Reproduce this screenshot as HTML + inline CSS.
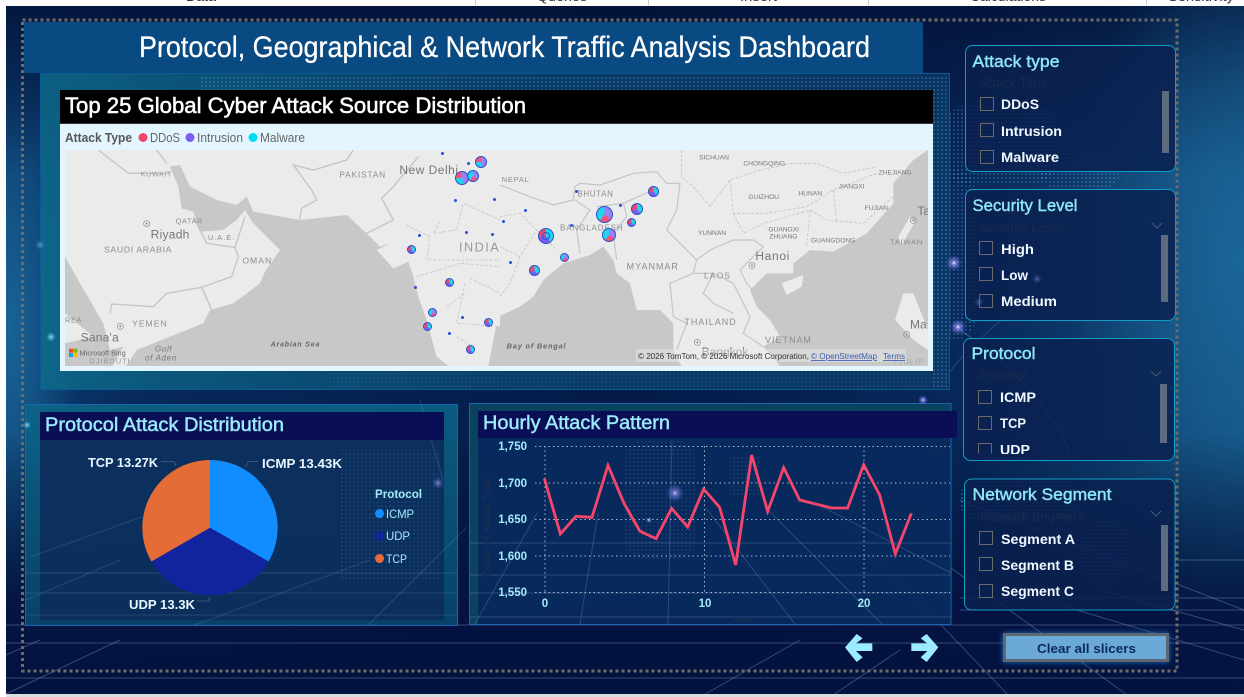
<!DOCTYPE html>
<html lang="en"><head><meta charset="utf-8"><title>Protocol, Geographical &amp; Network Traffic Analysis Dashboard</title>
<style>
html,body{margin:0;padding:0;background:#fff}
#r{position:relative;width:1244px;height:697px;overflow:hidden;font-family:"Liberation Sans",sans-serif}
svg{position:absolute;left:0;top:0}
.p{position:absolute;border-radius:50%;box-sizing:border-box;border:1px solid #2a50c8}
.a{background:conic-gradient(#9a80f5 0 45%,#22d3ee 45% 75%,#f5537a 75%)}
.b{background:conic-gradient(#9a80f5 0 35%,#f5537a 35% 60%,#22d3ee 60%)}
.c{background:conic-gradient(#22d3ee 0 40%,#7a5cf0 40% 70%,#f0446e 70%)}
.d{position:absolute;width:3px;height:3px;border-radius:50%;background:#2a50d8}
</style></head><body><div id="r">
<svg width="1244" height="697" viewBox="0 0 1244 697" xmlns="http://www.w3.org/2000/svg">
<defs>
<linearGradient id="bg" x1="0" y1="0" x2="1" y2="0"><stop offset="0" stop-color="#0b3f72"/><stop offset=".12" stop-color="#07285a"/><stop offset=".5" stop-color="#041a48"/><stop offset=".78" stop-color="#07285a"/><stop offset="1" stop-color="#135080"/></linearGradient>
<linearGradient id="bot" x1="0" y1="0" x2="0" y2="1"><stop offset="0" stop-color="#031030" stop-opacity="0"/><stop offset=".62" stop-color="#031030" stop-opacity="0"/><stop offset=".88" stop-color="#041240" stop-opacity=".95"/><stop offset="1" stop-color="#041240"/></linearGradient>
<linearGradient id="top" x1="0" y1="0" x2="0" y2="1"><stop offset="0" stop-color="#031238" stop-opacity=".9"/><stop offset=".25" stop-color="#031238" stop-opacity="0"/></linearGradient>
<radialGradient id="rgl" cx=".5" cy=".5" r=".5"><stop offset="0" stop-color="#1c6a9c" stop-opacity=".85"/><stop offset="1" stop-color="#1c6a9c" stop-opacity="0"/></radialGradient>
<radialGradient id="g" cx=".5" cy=".5" r=".5"><stop offset="0" stop-color="#fff" stop-opacity=".95"/><stop offset=".25" stop-color="#a9a0ff" stop-opacity=".7"/><stop offset="1" stop-color="#6a70ff" stop-opacity="0"/></radialGradient>
<radialGradient id="gc" cx=".5" cy=".5" r=".5"><stop offset="0" stop-color="#9fe8ff" stop-opacity=".9"/><stop offset="1" stop-color="#3ab0e8" stop-opacity="0"/></radialGradient>
<linearGradient id="mp" x1="0" y1="0" x2="1" y2="0"><stop offset="0" stop-color="#0d6a8a" stop-opacity=".85"/><stop offset=".5" stop-color="#0a4a72" stop-opacity=".75"/><stop offset="1" stop-color="#0a3a66" stop-opacity=".8"/></linearGradient>
<linearGradient id="lp" x1="0" y1="0" x2="0" y2="1"><stop offset="0" stop-color="#0c6688"/><stop offset="1" stop-color="#094a70"/></linearGradient>
<pattern id="dots" width="4" height="4" patternUnits="userSpaceOnUse"><rect x="1" y="1" width="2" height="2" fill="#5aa0d8" fill-opacity=".3"/></pattern>
<pattern id="dotsf" width="4" height="4" patternUnits="userSpaceOnUse"><rect x="1" y="1" width="2" height="2" fill="#5aa0d8" fill-opacity=".14"/></pattern>
<clipPath id="mc"><rect x="65" y="150" width="863" height="216"/></clipPath>
<clipPath id="sc3"><rect x="965" y="338" width="210" height="116"/></clipPath>
<filter id="gl" x="-20%" y="-40%" width="140%" height="180%"><feGaussianBlur stdDeviation="3"/></filter>
</defs>

<!-- background -->
<rect width="1244" height="697" fill="url(#bg)"/>
<ellipse cx="10" cy="330" rx="70" ry="260" fill="url(#rgl)"/>
<rect width="1244" height="697" fill="url(#top)"/>
<ellipse cx="1240" cy="260" rx="170" ry="340" fill="url(#rgl)"/>
<rect width="1244" height="697" fill="url(#bot)"/>
<g fill="url(#dots)">
<rect x="940" y="105" width="120" height="80" rx="30"/>
<rect x="925" y="170" width="50" height="170" rx="20"/>
<rect x="1040" y="150" width="80" height="40" rx="18"/>
<rect x="960" y="480" width="120" height="40" rx="18"/>
<rect x="1080" y="520" width="50" height="60" rx="20"/>
</g>
<g stroke="#a9c4ee" stroke-opacity=".3" stroke-width="1" fill="none">
<path d="M6 643H1244M6 678H1244M6 625H1244M960 598H1244M960 610H1244M1176 560H1244"/>
<path d="M960 500L1244 610M940 560L1130 697M850 530L1010 697M1010 590L1244 660M1100 590L1244 630"/>
<path d="M6 694L120 640M6 655L40 640M700 697L800 640M900 650L830 697"/>
<path d="M960 330C1020 370 1060 420 1072 460" stroke-opacity=".35"/>
<path d="M940 390C960 345 1010 320 1040 280" stroke-opacity=".2"/>
</g>

<!-- white screen edges and cut-off tab bar -->
<rect x="0" y="0" width="1244" height="6" fill="#fdfdfd"/>
<rect x="0" y="0" width="6" height="697" fill="#fff"/>
<rect x="6" y="694" width="1238" height="3" fill="#d8dde2"/>
<g font-size="13" fill="#333">
<text x="186" y="1" textLength="30" lengthAdjust="spacingAndGlyphs">Data</text>
<text x="537" y="1" textLength="50" lengthAdjust="spacingAndGlyphs">Queries</text>
<text x="740" y="1" textLength="37" lengthAdjust="spacingAndGlyphs">Insert</text>
<text x="970" y="1" textLength="76" lengthAdjust="spacingAndGlyphs">Calculations</text>
<text x="1168" y="1" textLength="66" lengthAdjust="spacingAndGlyphs">Sensitivity</text>
</g>
<path d="M475.500 0V5M648.500 0V5M868.500 0V5M1146.500 0V5" stroke="#ccc"/>

<!-- dotted frame -->
<rect x="22.500" y="20" width="1154.500" height="651" fill="none" stroke="#6f6b66" stroke-width="3" stroke-dasharray="3 3"/>

<!-- title -->
<rect x="24" y="22" width="899" height="51" fill="#0a4a82"/>
<text x="139" y="57" font-size="30" fill="#fff" stroke="#fff" stroke-width=".25" textLength="731" lengthAdjust="spacingAndGlyphs">Protocol, Geographical &amp; Network Traffic Analysis Dashboard</text>

<!-- map panel -->
<rect x="40.500" y="73.500" width="909" height="316" fill="url(#mp)" stroke="#0a5a96"/>
<rect x="200" y="75" width="748" height="15" fill="url(#dots)"/>
<rect x="933" y="90" width="16" height="298" fill="url(#dots)"/>
<rect x="330" y="372" width="600" height="16" fill="url(#dotsf)"/>
<rect x="60" y="90" width="873" height="281" fill="#e3f5ff"/>
<rect x="60" y="90" width="873" height="34" fill="#000"/>
<rect x="60" y="123" width="873" height="1" fill="#333"/>
<text x="65" y="113" font-size="22" fill="#fff" stroke="#fff" stroke-width=".55" textLength="461" lengthAdjust="spacingAndGlyphs">Top 25 Global Cyber Attack Source Distribution</text>
<text x="65" y="142" font-size="12.500" font-weight="bold" fill="#555" textLength="67" lengthAdjust="spacingAndGlyphs">Attack Type</text>
<circle cx="143" cy="137.500" r="4.500" fill="#f5456a"/><text x="150" y="142" font-size="12.500" fill="#666" textLength="30" lengthAdjust="spacingAndGlyphs">DDoS</text>
<circle cx="190" cy="137.500" r="4.500" fill="#7b5cf5"/><text x="197" y="142" font-size="12.500" fill="#666" textLength="46" lengthAdjust="spacingAndGlyphs">Intrusion</text>
<circle cx="253" cy="137.500" r="4.500" fill="#00dcf5"/><text x="260" y="142" font-size="12.500" fill="#666" textLength="45" lengthAdjust="spacingAndGlyphs">Malware</text>

<!-- map -->
<g clip-path="url(#mc)">
<rect x="65" y="150" width="863" height="216" fill="#ebebeb"/>
<g transform="translate(60,150) scale(.33333)">
<g fill="#c8c8c8">
<path d="M330 50L360 45L390 110L470 150L530 165L560 140L580 185L720 210L860 195L920 250L960 290L990 280L950 300L1000 355L1045 335L1060 380L1075 440L1100 510L1130 620L1165 648L1165 660H190L230 600L430 520L450 480L520 460L600 400L615 365L660 300L580 220L555 180L530 210L490 240L420 245L400 185L365 175L355 110Z"/>
<path d="M15 320L60 400L130 520L150 600L190 590L150 660H15V580L100 560L15 490Z" fill="#c8c8c8"/>
</g>
<g fill="none" stroke="#c4c4c4" stroke-width="4">
<path d="M115 0L205 70H330M290 0L320 40"/>
<path d="M400 200L440 280L525 292L535 320L515 380L425 412L320 430L280 470L155 462L150 490"/>
<path d="M425 412L460 490M525 292L555 200"/>
<path d="M880 0L860 30L760 60L700 45L755 120L770 150L725 175L718 210M860 30L880 0"/>
<path d="M1075 20L1000 110L965 145L1000 210L920 250"/>
</g>
<g fill="none" stroke="#c4c4c4" stroke-width="2.500" stroke-dasharray="9 5">
<path d="M1040 225L1110 260L1100 330L1320 330M1140 215L1120 250L1190 240L1210 160L1320 210"/>
<path d="M1070 380L1200 340L1320 350M1230 385L1320 430M1215 400L1190 520L1320 530M1160 470L1215 430M1190 560L1240 590"/>
</g>
<g fill="#8d8d8d" font-size="24">
<text x="242" y="80" letter-spacing="1.500" font-size="22" fill="#9a9a9a">KUWAIT</text>
<text x="838" y="82" letter-spacing="2.500" font-size="25">PAKISTAN</text>
<text x="1018" y="72" font-size="36" fill="#777" textLength="176">New Delhi</text>
<text x="347" y="220" letter-spacing="2" font-size="22">QATAR</text>
<text x="272" y="266" font-size="36" fill="#777" textLength="116">Riyadh</text>
<text x="444" y="270" letter-spacing="3" font-size="22">U.A.E.</text>
<text x="132" y="308" letter-spacing="2" font-size="26">SAUDI ARABIA</text>
<text x="547" y="341" letter-spacing="3" font-size="26">OMAN</text>
<text x="1197" y="304" letter-spacing="4" font-size="38" fill="#999" textLength="123">INDIA</text>
<text x="15" y="517" font-size="22" letter-spacing="2">REA</text>
<text x="216" y="530" font-size="26" letter-spacing="3">YEMEN</text>
<text x="62" y="574" font-size="36" fill="#777" textLength="114">Sana'a</text>
<text x="285" y="604" font-size="24" font-style="italic" letter-spacing="2" fill="#777">Gulf</text>
<text x="255" y="631" font-size="24" font-style="italic" letter-spacing="2" fill="#777">of Aden</text>
<text x="88" y="641" font-size="22" letter-spacing="3" fill="#999">DJIBOUTI</text>
<text x="632" y="590" font-size="21" font-style="italic" letter-spacing="2.500" fill="#666" font-weight="bold">Arabian Sea</text>
</g>
<circle cx="260" cy="221" r="9" fill="none" stroke="#888" stroke-width="2"/><circle cx="260" cy="221" r="3" fill="#888"/>
<circle cx="181" cy="529" r="9" fill="none" stroke="#888" stroke-width="2"/><circle cx="181" cy="529" r="3" fill="#888"/>
<rect x="27" y="596" width="12" height="12" fill="#f25022"/><rect x="40" y="596" width="12" height="12" fill="#7fba00"/><rect x="27" y="609" width="12" height="12" fill="#00a4ef"/><rect x="40" y="609" width="12" height="12" fill="#ffb900"/>
<text x="59" y="616" font-size="21" fill="#666" textLength="138" lengthAdjust="spacingAndGlyphs">Microsoft Bing</text>
</g>
<g transform="translate(500,150) scale(.33333)">
<g fill="#c8c8c8">
<path d="M0 497L60 470L100 440L130 390L190 340L270 315L310 290L340 330L350 370L390 400L410 480L480 480L520 520L520 600L545 648H0Z"/>
<path d="M-12 530L-35 648H5V530Z"/>
<path d="M1284 0L1240 30L1180 100L1180 160L1100 250L1000 305L930 300L880 340L880 370L800 370L750 420L770 470L810 510L840 560L790 590L840 648H1284Z"/>
</g>
<g fill="#ebebeb">
<path d="M1230 200L1245 215L1205 285L1195 260Z"/>
<path d="M845 400L910 375L905 410L860 435Z"/>
<path d="M1210 430L1240 430L1284 540V600L1240 570L1185 510Z"/>
</g>
<g fill="none" stroke="#c4c4c4" stroke-width="3.500">
<path d="M0 105L90 140L160 165L220 150L225 110L240 100L300 105L400 70L470 65L500 100L540 100L530 180L500 240L550 290L590 330L630 300L700 270L760 270L790 290L720 360L740 400L800 470L830 520"/>
<path d="M225 150L270 180L230 240L240 310M290 170L370 160L460 120M370 160L380 200L340 250L350 330"/>
<path d="M590 330L580 370L510 400L520 500L560 520L530 600M580 370L640 370L700 400L750 500L730 550L790 590M640 370L610 430L640 460L700 490"/>
</g>
<g fill="none" stroke="#c4c4c4" stroke-width="2.500" stroke-dasharray="9 5">
<path d="M545 0V80L590 120L630 170L690 90L780 60L880 40L950 40L1030 70L1130 50M690 90L700 190L800 190L920 170L1000 120L1130 70"/>
<path d="M700 190L730 250L790 220L930 180L980 210L1090 220L1180 140M930 180L920 290M1000 120L1010 220"/>
<path d="M0 200L60 190L110 240L60 320L0 290M110 240L170 300M60 320L30 400L0 440"/>
</g>
<g fill="#8d8d8d">
<text x="5" y="96" font-size="23" letter-spacing="2">NEPAL</text>
<text x="232" y="139" font-size="24" letter-spacing="2">BHUTAN</text>
<text x="180" y="242" font-size="24" letter-spacing="2" textLength="190">BANGLADESH</text>
<text x="597" y="28" font-size="20" fill="#777">SICHUAN</text>
<text x="730" y="47" font-size="20" fill="#777">CHONGQING</text>
<text x="1136" y="74" font-size="20" fill="#777">ZHEJIANG</text>
<text x="1016" y="115" font-size="20" fill="#777">JIANGXI</text>
<text x="745" y="147" font-size="20" fill="#777">GUIZHOU</text>
<text x="895" y="136" font-size="20" fill="#777">HUNAN</text>
<text x="1094" y="180" font-size="20" fill="#777">FUJIAN</text>
<text x="594" y="255" font-size="20" fill="#777">YUNNAN</text>
<text x="805" y="244" font-size="20" fill="#777">GUANGXI</text>
<text x="808" y="266" font-size="20" fill="#777">ZHUANG</text>
<text x="933" y="277" font-size="20" fill="#777">GUANGDONG</text>
<text x="1252" y="195" font-size="36" fill="#777">Ta</text>
<text x="1170" y="284" font-size="23" letter-spacing="2">TAIWAN</text>
<text x="380" y="358" font-size="27" letter-spacing="3">MYANMAR</text>
<text x="766" y="330" font-size="36" fill="#777" textLength="102">Hanoi</text>
<text x="612" y="386" font-size="26" letter-spacing="3">LAOS</text>
<text x="553" y="525" font-size="27" letter-spacing="3">THAILAND</text>
<text x="795" y="579" font-size="27" letter-spacing="3">VIETNAM</text>
<text x="1230" y="535" font-size="36" fill="#777">Ma</text>
<text x="605" y="618" font-size="36" fill="#777">Bangkok</text>
<text x="1180" y="644" font-size="24" letter-spacing="3" fill="#aaa">PHILIP</text>
<text x="20" y="596" font-size="22" font-style="italic" font-weight="bold" letter-spacing="2.500" fill="#666">Bay of Bengal</text>
</g>
<circle cx="756" cy="346" r="9" fill="none" stroke="#888" stroke-width="2"/><circle cx="756" cy="346" r="3" fill="#888"/>
<circle cx="1240" cy="211" r="9" fill="none" stroke="#888" stroke-width="2"/><circle cx="1240" cy="211" r="3" fill="#888"/>
<circle cx="1220" cy="553" r="9" fill="none" stroke="#888" stroke-width="2"/><circle cx="1220" cy="553" r="3" fill="#888"/>
<circle cx="592" cy="577" r="9" fill="none" stroke="#888" stroke-width="2"/><circle cx="592" cy="577" r="3" fill="#888"/>
</g>
<rect x="636" y="349" width="270" height="13" fill="#ebebeb" fill-opacity=".45"/>
<text x="638" y="359" font-size="8.500" fill="#333" textLength="171" lengthAdjust="spacingAndGlyphs">© 2026 TomTom, © 2026 Microsoft Corporation,</text>
<text x="811" y="359" font-size="8.500" fill="#3a5cb0" text-decoration="underline" textLength="66" lengthAdjust="spacingAndGlyphs">© OpenStreetMap</text>
<text x="883" y="359" font-size="8.500" fill="#3a5cb0" text-decoration="underline" textLength="22" lengthAdjust="spacingAndGlyphs">Terms</text>
</g>

<!-- protocol panel -->
<rect x="25.500" y="404.500" width="432" height="221" fill="url(#lp)" fill-opacity=".85" stroke="#1a64b0"/>
<rect x="40" y="412" width="404" height="208" fill="#0c2c5a" fill-opacity=".9"/>
<path d="M340 450h100v130h-100z" fill="url(#dotsf)"/>
<g stroke="#a9c4ee" stroke-opacity=".16" fill="none">
<path d="M26 573H457M26 593H457M26 615H457"/>
<path d="M467 527L368 625M370 560L195 625M30 557L153 513M420 400L443 480M26 600L120 560"/>
</g>
<rect x="40" y="412" width="404" height="28" fill="#0a0f55"/>
<text x="45" y="431" font-size="19" fill="#9ce9fb" textLength="239" lengthAdjust="spacingAndGlyphs" stroke="#9ce9fb" stroke-width=".45">Protocol Attack Distribution</text>
<path d="M210 527.700V460A67.700 67.700 0 0 1 268.600 561.500Z" fill="#118dff"/>
<path d="M210 527.700L268.600 561.500A67.700 67.700 0 0 1 151.400 561.500Z" fill="#12239e"/>
<path d="M210 527.700L151.400 561.500A67.700 67.700 0 0 1 210 460Z" fill="#e66c37"/>
<path d="M161 461.500H174L176 466M246 467L248 461.500H258M197 601H209V597" fill="none" stroke="#3d5470"/>
<g font-size="13" font-weight="bold" fill="#e8f6ff">
<text x="88" y="467" textLength="70" lengthAdjust="spacingAndGlyphs">TCP 13.27K</text>
<text x="262" y="468" textLength="80" lengthAdjust="spacingAndGlyphs">ICMP 13.43K</text>
<text x="129" y="609" textLength="66" lengthAdjust="spacingAndGlyphs">UDP 13.3K</text>
</g>
<text x="375" y="498" font-size="11.500" font-weight="bold" fill="#a3eafa" textLength="47" lengthAdjust="spacingAndGlyphs">Protocol</text>
<circle cx="379.500" cy="513.500" r="4.500" fill="#118dff"/><text x="386" y="518" font-size="12" fill="#a3eafa" textLength="28" lengthAdjust="spacingAndGlyphs">ICMP</text>
<circle cx="379.500" cy="536" r="4.500" fill="#12239e"/><text x="386" y="540" font-size="12" fill="#a3eafa" textLength="24" lengthAdjust="spacingAndGlyphs">UDP</text>
<circle cx="379.500" cy="558.500" r="4.500" fill="#e66c37"/><text x="386" y="563" font-size="12" fill="#a3eafa" textLength="21" lengthAdjust="spacingAndGlyphs">TCP</text>

<!-- hourly panel -->
<rect x="469.500" y="403.500" width="481.500" height="221" fill="#082a5e" fill-opacity=".95" stroke="#1a64b0"/>
<rect x="470" y="404" width="8" height="220" fill="#0a4e62" fill-opacity=".7"/>
<rect x="478" y="404" width="472" height="7" fill="#0a4e62" fill-opacity=".7"/>
<rect x="625" y="440" width="70" height="120" rx="20" fill="url(#dotsf)"/>
<rect x="730" y="455" width="30" height="40" fill="url(#dotsf)"/>
<g stroke="#a9c4ee" stroke-opacity=".22" fill="none">
<path d="M470 543H951M470 575H951M470 593H951M470 617H951"/>
<path d="M672 440L668 624M598 513L580 624M537 513L475 624M765 507L882 624M815 503L951 573M705 507L795 624"/>
</g>
<rect x="478" y="411" width="479" height="27" fill="#0a0f55"/>
<text x="483" y="429" font-size="19" fill="#9ce9fb" textLength="187" lengthAdjust="spacingAndGlyphs" stroke="#9ce9fb" stroke-width=".45">Hourly Attack Pattern</text>
<path d="M535 446.500H950M535 483H950M535 519.500H950M535 556H950M535 592.500H950" stroke="#a8bad0" stroke-dasharray="1.500 3" stroke-width="1"/>
<path d="M545 446V592M704.500 446V592M864 446V592" stroke="#a8bad0" stroke-dasharray="1.500 3" stroke-width="1"/>
<g font-size="11.500" font-weight="bold" fill="#a3eafa" text-anchor="end">
<text x="527" y="450">1,750</text><text x="527" y="487">1,700</text><text x="527" y="523">1,650</text><text x="527" y="560">1,600</text><text x="527" y="596">1,550</text>
</g>
<g font-size="11.500" font-weight="bold" fill="#a3eafa" text-anchor="middle">
<text x="545" y="607">0</text><text x="705" y="607">10</text><text x="864" y="607">20</text>
</g>
<text x="490" y="527" font-size="10" fill="#1b2f52" font-weight="bold" transform="rotate(-90 490 527)" text-anchor="middle">Count of Attack Type</text>
<text x="744" y="622" font-size="9" fill="#1b2f52" font-style="italic" font-weight="bold" text-anchor="middle">Hour</text>
<g transform="translate(465,400) scale(.33333)">
<polyline fill="none" stroke="#f5456a" stroke-width="8.500" stroke-linejoin="miter" points="238,235 286,402 333,349 381,352 429,196 477,310 525,394 573,416 620,325 668,381 716,267 764,322 812,495 860,165 908,334 956,203 1004,300 1052,312 1100,324 1148,324 1196,194 1244,285 1291,462 1339,340"/>
</g>

<!-- glows -->
<g>
<circle cx="675" cy="493" r="9" fill="url(#g)" opacity=".8"/>
<circle cx="954" cy="263" r="8" fill="url(#g)"/>
<circle cx="958" cy="327" r="8" fill="url(#g)"/>
<circle cx="438" cy="483" r="6" fill="url(#g)" opacity=".6"/>
<circle cx="40" cy="245" r="5" fill="url(#gc)" opacity=".5"/>
<circle cx="51" cy="337" r="5" fill="url(#gc)"/>
<circle cx="27" cy="425" r="4" fill="url(#gc)"/>
<circle cx="649" cy="520" r="3" fill="url(#gc)"/>
<circle cx="923" cy="400" r="5" fill="url(#g)"/>
</g>

<!-- slicers -->
<g fill="#0a2150" fill-opacity=".85" stroke="#0f9fc4" stroke-width="1">
<rect x="965.500" y="45.500" width="210" height="126" rx="7"/>
<rect x="965.500" y="189.500" width="210" height="131" rx="7"/>
<rect x="963.500" y="338.500" width="211" height="122" rx="7"/>
<rect x="964.500" y="479" width="210.500" height="131" rx="7"/>
</g>
<circle cx="1037" cy="279" r="5" fill="url(#g)" opacity=".4"/>
<circle cx="979" cy="302" r="5" fill="url(#g)" opacity=".35"/>
<g font-size="17" fill="#8fe8f8" stroke="#8fe8f8" stroke-width=".4">
<text x="972.500" y="67" textLength="87" lengthAdjust="spacingAndGlyphs">Attack type</text>
<text x="972.500" y="211" textLength="105" lengthAdjust="spacingAndGlyphs">Security Level</text>
<text x="971.500" y="359" textLength="64" lengthAdjust="spacingAndGlyphs">Protocol</text>
<text x="972.500" y="500" textLength="139" lengthAdjust="spacingAndGlyphs">Network Segment</text>
</g>
<g font-size="13" fill="#1b2a4c">
<text x="980" y="87" textLength="68" lengthAdjust="spacingAndGlyphs">Attack Type</text>
<text x="980" y="232" textLength="83" lengthAdjust="spacingAndGlyphs">Severity Level</text>
<text x="979" y="380" textLength="48" lengthAdjust="spacingAndGlyphs">Protocol</text>
<text x="980" y="521" textLength="104" lengthAdjust="spacingAndGlyphs">Network Segment</text>
</g>
<path d="M1152 223L1157 228L1162 223M1151 371L1156 376L1161 371M1151 511L1156 516L1161 511" fill="none" stroke="#4a5a70" stroke-width="1"/>
<g fill="none" stroke="#6b6a68" stroke-width="1">
<rect x="980.500" y="97.500" width="13" height="13"/><rect x="980.500" y="123.500" width="13" height="13"/><rect x="980.500" y="150.500" width="13" height="13"/>
<rect x="979.500" y="241.500" width="13" height="13"/><rect x="979.500" y="267.500" width="13" height="13"/><rect x="979.500" y="294.500" width="13" height="13"/>
<rect x="978.500" y="390.500" width="13" height="13"/><rect x="978.500" y="416.500" width="13" height="13"/>
<path d="M978.500 453.500V443.500H991.500V453.500"/>
<rect x="979.500" y="531.500" width="13" height="13"/><rect x="979.500" y="557.500" width="13" height="13"/><rect x="979.500" y="584.500" width="13" height="13"/>
</g>
<g font-size="13.500" font-weight="bold" fill="#f0f8ff">
<text x="1001" y="109" textLength="38" lengthAdjust="spacingAndGlyphs">DDoS</text>
<text x="1001" y="136" textLength="61" lengthAdjust="spacingAndGlyphs">Intrusion</text>
<text x="1001" y="162" textLength="58" lengthAdjust="spacingAndGlyphs">Malware</text>
<text x="1001" y="254" textLength="33" lengthAdjust="spacingAndGlyphs">High</text>
<text x="1001" y="280" textLength="27" lengthAdjust="spacingAndGlyphs">Low</text>
<text x="1001" y="306" textLength="56" lengthAdjust="spacingAndGlyphs">Medium</text>
<text x="1000" y="402" textLength="36" lengthAdjust="spacingAndGlyphs">ICMP</text>
<text x="1000" y="428" textLength="26" lengthAdjust="spacingAndGlyphs">TCP</text>
<g clip-path="url(#sc3)"><text x="1000" y="454.500" textLength="30" lengthAdjust="spacingAndGlyphs">UDP</text></g>
<text x="1001" y="544" textLength="74" lengthAdjust="spacingAndGlyphs">Segment A</text>
<text x="1001" y="570" textLength="73" lengthAdjust="spacingAndGlyphs">Segment B</text>
<text x="1001" y="596" textLength="73" lengthAdjust="spacingAndGlyphs">Segment C</text>
</g>
<g fill="#5c6b80">
<rect x="1162" y="91" width="7" height="62"/>
<rect x="1161" y="235" width="7" height="67"/>
<rect x="1160" y="384" width="7" height="59"/>
<rect x="1161" y="525" width="7" height="66"/>
</g>

<!-- nav arrows -->
<g transform="translate(830,470) scale(.33333)" fill="#9cecff">
<path d="M45 532L80 492L98 505L78 520H127V543H78L98 562L80 576Z"/>
<path d="M325 532L290 492L272 505L292 520H244V543H292L272 562L290 576Z"/>
</g>

<!-- clear button -->
<rect x="1003" y="633" width="166" height="29" fill="#1e8ae0" fill-opacity=".8" filter="url(#gl)"/>
<rect x="1004.500" y="634.500" width="163" height="26" fill="#6aa9d8" stroke="#5f6872" stroke-width="3"/>
<text x="1037" y="653" font-size="13" font-weight="bold" fill="#0f2a58" textLength="99" lengthAdjust="spacingAndGlyphs">Clear all slicers</text>
</svg>

<!-- map bubbles -->
<div class="p a" style="left:475px;top:156px;width:12px;height:12px"></div>
<div class="p a" style="left:455px;top:171px;width:14px;height:14px"></div>
<div class="p b" style="left:467px;top:170px;width:12px;height:12px"></div>
<div class="p c" style="left:407px;top:245px;width:9px;height:9px"></div>
<div class="p c" style="left:445px;top:278px;width:9px;height:9px"></div>
<div class="p b" style="left:428px;top:308px;width:9px;height:9px"></div>
<div class="p c" style="left:423px;top:322px;width:9px;height:9px"></div>
<div class="p c" style="left:484px;top:318px;width:9px;height:9px"></div>
<div class="p c" style="left:466px;top:345px;width:9px;height:9px"></div>
<div class="p c" style="left:538px;top:228px;width:16px;height:16px"></div>
<div class="p c" style="left:542px;top:232px;width:8px;height:8px"></div>
<div class="p c" style="left:529px;top:265px;width:11px;height:11px"></div>
<div class="p b" style="left:560px;top:253px;width:9px;height:9px"></div>
<div class="p b" style="left:596px;top:206px;width:17px;height:17px"></div>
<div class="p b" style="left:602px;top:228px;width:14px;height:14px"></div>
<div class="p c" style="left:627px;top:218px;width:9px;height:9px"></div>
<div class="p c" style="left:631px;top:203px;width:12px;height:12px"></div>
<div class="p c" style="left:648px;top:186px;width:11px;height:11px"></div>
<div class="d" style="left:441px;top:152px"></div><div class="d" style="left:467px;top:162px"></div>
<div class="d" style="left:454px;top:199px"></div><div class="d" style="left:493px;top:198px"></div>
<div class="d" style="left:465px;top:231px"></div><div class="d" style="left:491px;top:233px"></div>
<div class="d" style="left:418px;top:234px"></div><div class="d" style="left:414px;top:286px"></div>
<div class="d" style="left:461px;top:316px"></div><div class="d" style="left:448px;top:332px"></div>
<div class="d" style="left:575px;top:190px"></div><div class="d" style="left:524px;top:209px"></div>
<div class="d" style="left:502px;top:220px"></div><div class="d" style="left:619px;top:204px"></div>
<div class="d" style="left:570px;top:224px"></div><div class="d" style="left:509px;top:261px"></div>
</div></body></html>
